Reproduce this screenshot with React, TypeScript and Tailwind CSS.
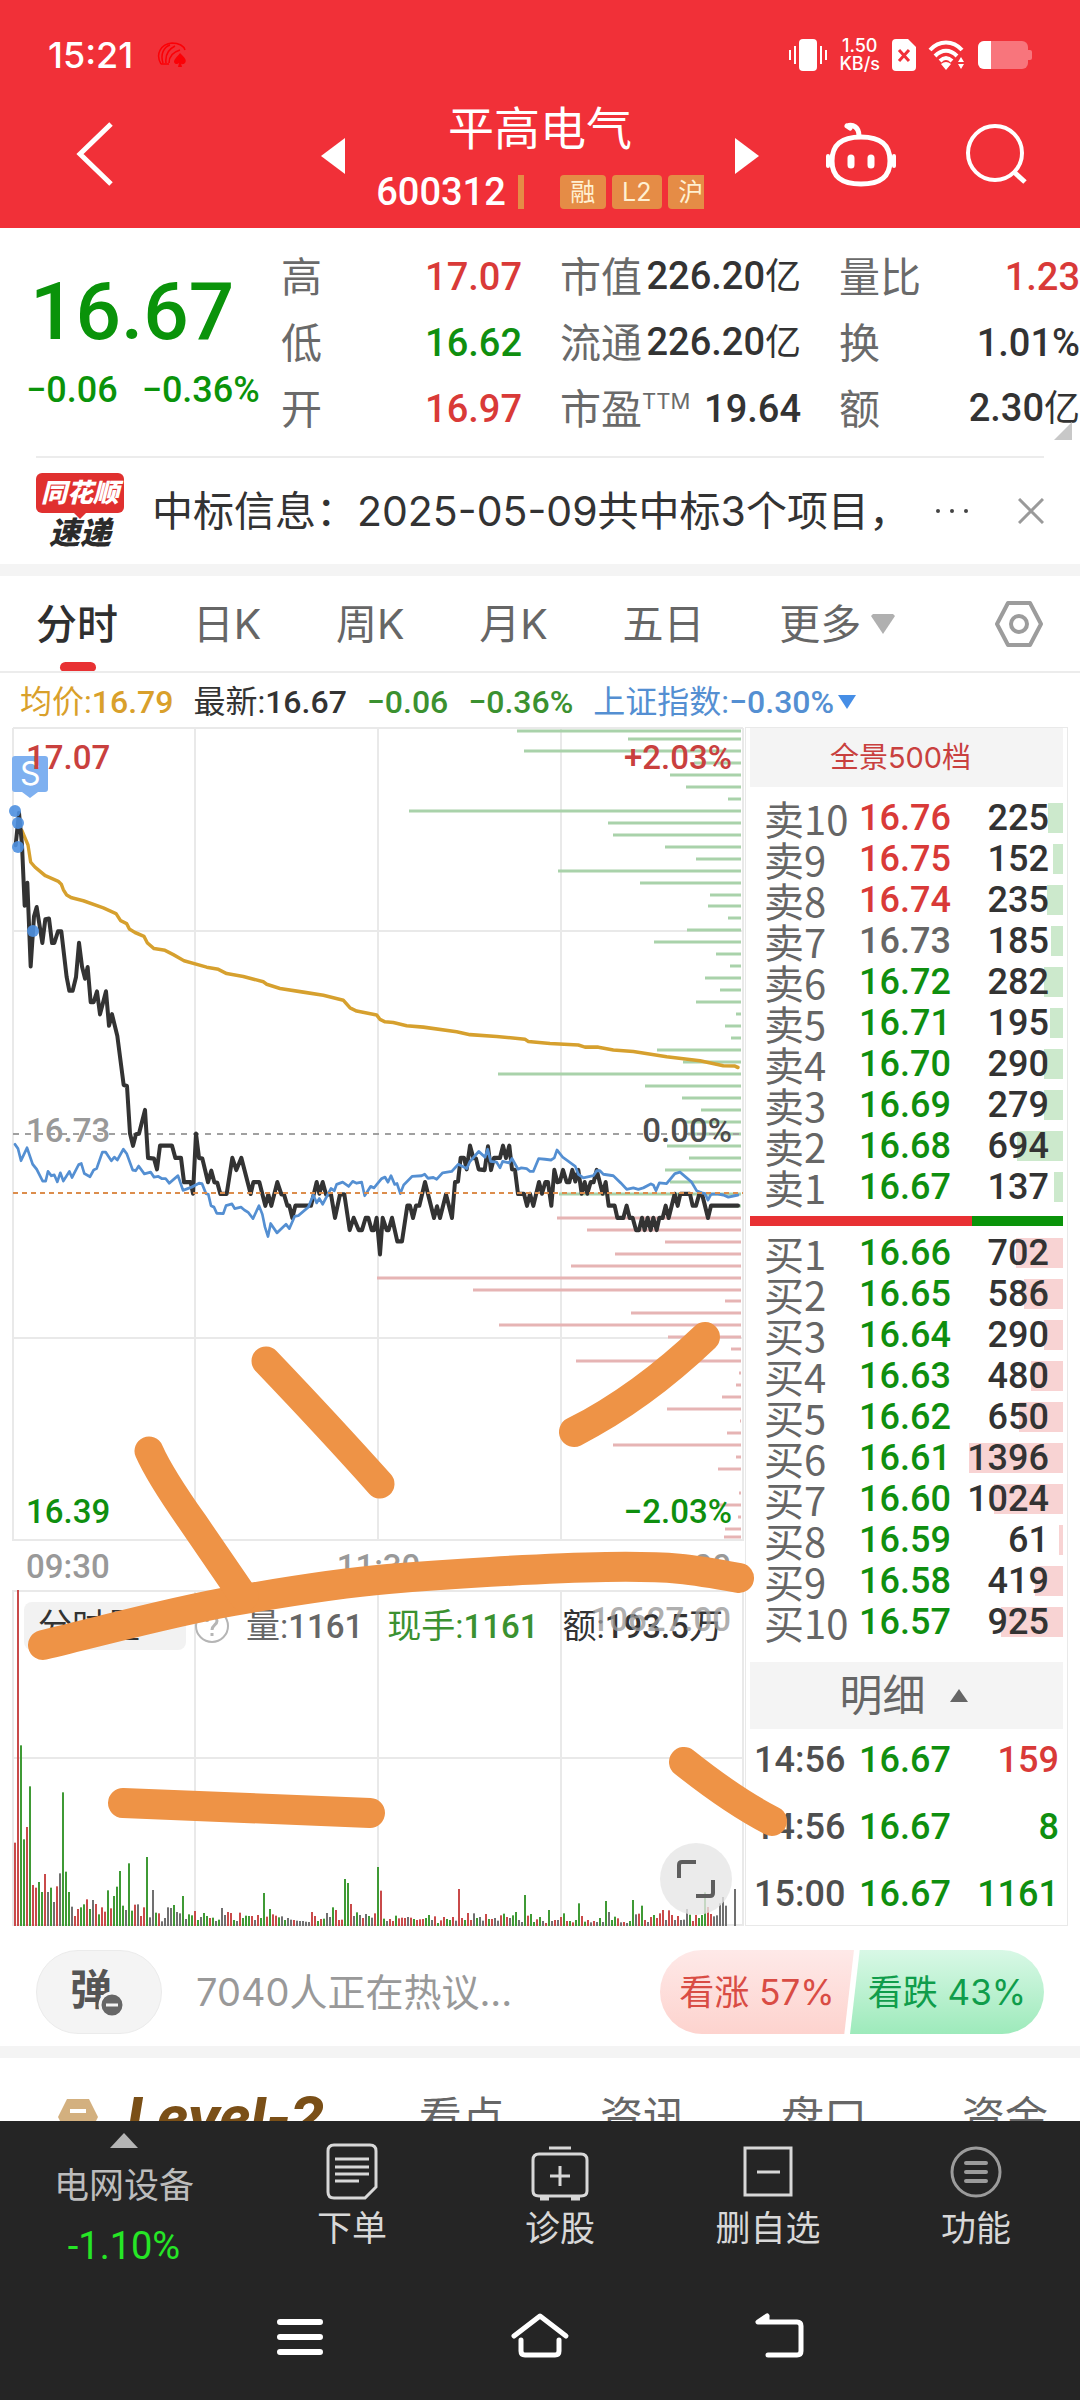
import React from "react";

const NUM = "font-['Roboto','Noto_Sans_CJK_SC',sans-serif] font-medium whitespace-nowrap";

/* ---------- data ---------- */

const PRICE_LINE =
  "47,350 57,260 66,350 74,520 82,456 92,690 102,550 110,524 127,624 136,558 147,556 156,624 163,624 174,592 184,592 200,720 208,758 218,758 228,720 237,624 246,690 255,724 263,692 272,790 281,790 291,760 300,824 318,760 327,856 336,824 352,885 371,1022 381,1025 390,1158 399,1192 408,1160 417,1158 435,1092 444,1226 462,1228 471,1258 480,1192 516,1192 526,1226 543,1226 552,1294 572,1294 579,1326 588,1158 597,1226 607,1228 624,1294 634,1262 643,1294 652,1296 661,1327 680,1327 697,1226 709,1260 724,1226 752,1327 760,1294 778,1294 796,1360 805,1328 814,1360 832,1294 844,1328 852,1328 862,1360 868,1360 877,1394 886,1360 933,1360 950,1294 958,1326 968,1294 978,1328 993,1328 1005,1394 1020,1328 1033,1328 1049,1428 1061,1394 1076,1428 1086,1428 1097,1394 1105,1394 1115,1428 1122,1428 1130,1394 1140,1496 1148,1394 1160,1428 1166,1428 1176,1394 1192,1460 1206,1460 1222,1360 1230,1360 1239,1394 1248,1360 1258,1360 1275,1294 1302,1394 1311,1362 1320,1394 1338,1328 1356,1394 1365,1294 1374,1292 1382,1226 1392,1226 1400,1258 1410,1192 1420,1226 1428,1228 1436,1258 1454,1260 1464,1194 1473,1260 1482,1226 1500,1226 1509,1192 1518,1226 1528,1192 1536,1258 1545,1260 1554,1327 1572,1327 1581,1360 1590,1327 1600,1360 1617,1294 1626,1326 1636,1294 1644,1294 1654,1360 1663,1260 1672,1294 1680,1292 1689,1260 1700,1294 1708,1294 1717,1260 1726,1292 1735,1260 1745,1326 1754,1294 1762,1326 1772,1294 1781,1294 1790,1260 1808,1326 1817,1294 1826,1360 1844,1360 1852,1394 1870,1394 1880,1360 1889,1394 1898,1394 1908,1428 1917,1428 1926,1394 1934,1428 1943,1394 1952,1428 1960,1394 1970,1428 1978,1394 1988,1394 1997,1360 2006,1394 2024,1327 2033,1360 2041,1327 2070,1327 2078,1360 2088,1360 2098,1327 2106,1327 2124,1394 2133,1360 2214,1360";

const AVG_LINE =
  "66,310 84,350 92,398 105,412 136,436 175,452 184,460 190,475 200,490 215,498 250,506 310,526 348,542 362,562 380,570 388,585 405,595 432,606 442,624 462,640 495,645 520,657 552,674 620,692 655,698 680,710 730,718 790,733 800,740 840,752 910,762 970,771 1030,785 1050,806 1070,815 1130,826 1140,838 1155,845 1180,847 1220,856 1270,860 1370,873 1410,881 1490,886 1575,894 1585,900 1650,906 1735,910 1755,916 1795,916 1840,924 1900,928 2000,943 2100,954 2170,968 2205,969 2214,973";

const INDEX_LINE =
  "45,1188 54,1200 63,1234 81,1198 98,1244 110,1258 128,1291 137,1291 144,1264 154,1276 163,1274 172,1293 181,1268 190,1291 208,1264 216,1281 236,1245 244,1242 253,1270 270,1279 281,1260 290,1256 307,1210 317,1210 334,1234 343,1224 352,1232 370,1202 380,1214 398,1260 407,1262 416,1249 433,1271 452,1266 462,1280 475,1278 485,1284 497,1284 508,1297 534,1276 549,1317 575,1308 597,1297 606,1298 618,1326 625,1328 633,1360 642,1364 650,1381 670,1382 678,1360 696,1355 704,1368 723,1364 733,1372 744,1378 759,1396 777,1360 787,1384 795,1420 804,1446 812,1410 831,1436 858,1412 868,1424 884,1390 895,1388 925,1364 940,1330 950,1352 958,1340 968,1356 993,1312 1003,1318 1010,1300 1028,1294 1046,1306 1058,1292 1070,1297 1085,1294 1094,1332 1112,1306 1122,1310 1145,1284 1155,1280 1164,1294 1173,1276 1184,1300 1191,1298 1201,1326 1211,1302 1236,1278 1265,1276 1274,1272 1284,1283 1300,1281 1310,1286 1328,1268 1355,1264 1375,1244 1400,1256 1410,1236 1436,1208 1455,1224 1463,1202 1472,1236 1490,1238 1500,1254 1508,1236 1527,1240 1536,1228 1554,1258 1564,1254 1580,1256 1590,1264 1600,1264 1616,1228 1635,1230 1653,1232 1663,1226 1671,1204 1688,1224 1726,1250 1735,1272 1750,1282 1780,1276 1790,1262 1800,1262 1810,1272 1840,1276 1862,1296 1880,1314 1900,1310 1915,1314 1930,1310 1952,1299 1960,1302 1968,1318 1978,1296 2000,1298 2025,1270 2040,1266 2075,1294 2090,1318 2105,1324 2115,1326 2124,1344 2133,1328 2150,1327 2170,1330 2185,1336 2214,1330";

/* depth bars: [y, left edge] */
const SELL_DEPTH: [number, number][] = [
  [731, 517], [739, 628], [751, 524], [763, 694], [775, 670], [787, 686], [799, 728], [811, 409], [823, 608],
  [835, 613], [847, 665], [859, 696], [871, 558], [883, 640], [895, 710], [906, 708], [918, 728], [930, 687],
  [942, 654], [954, 716], [966, 730], [978, 705], [990, 720], [1002, 696], [1014, 736], [1026, 725], [1038, 731],
  [1050, 657], [1062, 683], [1074, 498], [1086, 645], [1098, 682], [1110, 701], [1122, 684], [1134, 688],
  [1146, 667], [1158, 689], [1170, 665], [1182, 670], [1194, 559], [1206, 713],
];
const BUY_DEPTH: [number, number][] = [
  [1218, 557], [1230, 587], [1242, 665], [1254, 615], [1266, 571], [1278, 377], [1290, 473], [1301, 725],
  [1313, 631], [1325, 499], [1337, 668], [1349, 731], [1361, 576], [1373, 739], [1385, 736], [1397, 722],
  [1409, 667], [1421, 740], [1433, 727], [1445, 613], [1457, 736], [1469, 718], [1493, 739], [1505, 716],
  [1517, 738], [1529, 725], [1537, 724],
];

const VOLUME =
  "r848 r90 g556 g838 r801 g679 r975 r983 g966 g996 r942 k996 g983 k1026 r979 k940 g697 g935 g996 k1040 r1068 r1047 g1042 g1033 r1018 g1047 k1020 r1032 g1063 r1042 r1055 g991 r1045 g1008 g980 g933 g1037 k1050 g910 g1052 r1034 k1033 r1068 r1042 g891 k1072 k990 g1058 r1060 k1084 k1074 k1042 k1044 g1035 k1056 k1060 g1008 k1077 g1063 g1066 r1053 g1080 k1071 g1059 g1068 r1074 g1073 k1083 g1079 k1044 k1065 r1056 r1059 g1080 k1083 r1058 g1074 g1067 g1068 r1068 k1080 r1065 g1074 g999 r1070 g1047 r1063 r1067 g1072 k1069 g1080 k1074 k1079 r1080 k1082 k1083 k1083 k1085 k1086 r1056 r1068 g1083 r1077 g1076 k1059 k1071 g1042 r1050 r1080 r1079 g957 g969 r1032 k1068 g1057 k1065 r1074 k1062 g1068 k1073 r1060 g921 r992 g1076 k1083 r1077 r1083 g1067 r1075 r1073 r1074 k1071 r1073 g1077 r1080 r1078 r1077 g1074 g1065 k1080 r1069 g1089 r1081 r1071 g1077 g1080 r1071 k1082 r987 r1074 g1080 r1059 r1080 k1060 g1074 k1071 k1082 r1062 g1077 r1077 k1074 k1082 r1066 g1061 r1071 k1074 g1066 g1056 k1080 k1086 g1005 r1067 g1062 g1086 r1078 g1071 k1083 r1089 g1050 k1083 r1080 k1080 r1071 g1060 r1083 g1083 r1087 g1080 g1030 r1068 g1085 r1080 k1087 r1083 k1086 g1074 k1086 g1023 k1056 g1080 g1070 r1075 k1087 r1086 k1089 g1083 g1020 k1063 r1061 g1037 r1080 k1086 r1071 g1065 r1074 r1060 r1050 k1080 r1051 r1065 k1080 r1068 k1080 k1079 k1047 g1064 r1083 r1065 g1074 g1065 g997 r1041 r1062 k1069 k1066 k1030 k1011 k1037 k1098 k1098 k987"
    .split(" ")
    .map((t) => ({ kind: t[0], top: Number(t.slice(1)) }));
const VOLUME_COLOR: Record<string, string> = { r: "#c94a4a", g: "#3f9a35", k: "#707070" };

const SELLS: [string, string, number, string][] = [
  ["卖10", "16.76", 225, "text-[#d93a38]"],
  ["卖9", "16.75", 152, "text-[#d93a38]"],
  ["卖8", "16.74", 235, "text-[#d93a38]"],
  ["卖7", "16.73", 185, "text-[#666666]"],
  ["卖6", "16.72", 282, "text-[#0f8f0f]"],
  ["卖5", "16.71", 195, "text-[#0f8f0f]"],
  ["卖4", "16.70", 290, "text-[#0f8f0f]"],
  ["卖3", "16.69", 279, "text-[#0f8f0f]"],
  ["卖2", "16.68", 694, "text-[#0f8f0f]"],
  ["卖1", "16.67", 137, "text-[#0f8f0f]"],
];
const BUYS: [string, string, number, string][] = [
  ["买1", "16.66", 702, "text-[#0f8f0f]"],
  ["买2", "16.65", 586, "text-[#0f8f0f]"],
  ["买3", "16.64", 290, "text-[#0f8f0f]"],
  ["买4", "16.63", 480, "text-[#0f8f0f]"],
  ["买5", "16.62", 650, "text-[#0f8f0f]"],
  ["买6", "16.61", 1396, "text-[#0f8f0f]"],
  ["买7", "16.60", 1024, "text-[#0f8f0f]"],
  ["买8", "16.59", 61, "text-[#0f8f0f]"],
  ["买9", "16.58", 419, "text-[#0f8f0f]"],
  ["买10", "16.57", 925, "text-[#0f8f0f]"],
];
const TRADES: [string, string, string, string][] = [
  ["14:56", "16.67", "159", "text-[#d93a38]"],
  ["14:56", "16.67", "8", "text-[#0f8f0f]"],
  ["15:00", "16.67", "1161", "text-[#0f8f0f]"],
];

/* ---------- header ---------- */

function StatusBar() {
  return (
    <div className="flex h-[110px] items-center justify-between pl-12 pr-12 text-white">
      <div className="flex items-center gap-6">
        <span className="text-[36px] font-medium leading-10">15:21</span>
        <svg width="30" height="26" viewBox="0 0 30 26" fill="none" stroke="#fb0006" strokeWidth="1.5">
          <path d="M4 22C-2 12 4 2 15 1c7 0 12 3 13 7M6 21C3 12 7 5 13 3M9 21C8 13 12 7 18 4M12 21c0-6 4-11 11-13M4 22h8" />
          <path d="M23 11c5 5 7 7 5 10-2 2-4 1-4 0l1 4h-4l1-4c-1 1-4 2-5-1 0-3 3-5 6-9z" fill="#fb0006" stroke="none" />
        </svg>
      </div>
      <div className="flex items-center gap-3">
        <svg width="38" height="32" viewBox="0 0 38 32" fill="#fff">
          <rect x="10" y="0" width="18" height="32" rx="4" />
          <path d="M5 7h2v18H5zM31 7h2v18h-2zM0 11h2v10H0zM36 11h2v10h-2z" />
        </svg>
        <span className="text-center text-[18px] font-medium leading-[18px]">
          1.50
          <br />
          KB/s
        </span>
        <svg width="24" height="32" viewBox="0 0 24 32">
          <path d="M4 0h12l8 8v20a4 4 0 0 1-4 4H4a4 4 0 0 1-4-4V4a4 4 0 0 1 4-4z" fill="#fff" />
          <path d="M7 11l10 11M17 11L7 22" stroke="#f13038" strokeWidth="3" />
        </svg>
        <svg width="38" height="30" viewBox="0 0 38 30" fill="none" stroke="#fff" strokeWidth="4">
          <path d="M2 10C11 0 25 0 34 10M7 16c7-7 15-7 22 0M12 21c4-4 8-4 12 0" />
          <path d="M13 24q5-4 10 0l-5 6zM30 22l3-5 3 5zM30 24l3 5 3-5z" fill="#fff" stroke="none" />
        </svg>
        <svg width="54" height="28" viewBox="0 0 54 28">
          <rect width="50" height="28" rx="6" fill="#f8757c" />
          <path d="M50 9h2a2 2 0 0 1 2 2v6a2 2 0 0 1-2 2h-2z" fill="#f8757c" />
          <path d="M6 0h7v28H6a6 6 0 0 1-6-6V6a6 6 0 0 1 6-6z" fill="#fff" />
        </svg>
      </div>
    </div>
  );
}

function Header() {
  return (
    <header className="shrink-0 bg-[#f13038]">
      <StatusBar />
      <div className="grid h-[118px] grid-cols-[1fr_438px_1fr] items-start text-white">
        <div className="pl-[74px] pt-2.5">
          <button type="button" aria-label="返回" className="block">
            <svg width="42" height="68" viewBox="0 0 42 68" fill="none" stroke="#fff" strokeWidth="5">
              <path d="M37 4L6 34l31 30" />
            </svg>
          </button>
        </div>
        <div className="flex justify-between">
          <button type="button" aria-label="上一只" className="mt-7 self-start">
            <svg width="24" height="36" viewBox="0 0 24 36" fill="#fff"><path d="M24 0v36L0 18z" /></svg>
          </button>
          <div className="flex flex-col items-center">
            <h1 className="-mt-5 text-[46px] font-normal leading-[76px]">平高电气</h1>
            <div className="mt-[9px] flex h-[34px] items-center">
              <span className={`text-[38px] leading-[34px] ${NUM}`}>600312</span>
              <span className="ml-3 h-[34px] w-1.5 bg-[#e58c46]" />
              <div className="ml-9 flex w-36 gap-1.5 overflow-hidden text-[25px] leading-[34px] text-[#fff0d2]">
                <span className="w-[46px] shrink-0 rounded-sm bg-[#e58c46] text-center">融</span>
                <span className="w-[50px] shrink-0 rounded-sm bg-[#e58c46] text-center">L2</span>
                <span className="w-[46px] shrink-0 rounded-sm bg-[#e58c46] text-center">沪</span>
              </div>
            </div>
          </div>
          <button type="button" aria-label="下一只" className="mt-7 self-start">
            <svg width="24" height="36" viewBox="0 0 24 36" fill="#fff"><path d="M0 0v36l24-18z" /></svg>
          </button>
        </div>
        <div className="flex justify-end gap-[66px] pr-[51px] pt-3">
          <button type="button" aria-label="智能助手">
            <svg width="72" height="66" viewBox="0 0 72 66" fill="none" stroke="#fff" strokeWidth="5" strokeLinecap="round">
              <path d="M22 4c6-2 12 1 12 10M22 4l3 2" />
              <path d="M36 15c21 0 29 9 29 24 0 16-10 23-29 23S7 55 7 39c0-15 8-24 29-24z" />
              <path d="M3 34v10M69 34v10" strokeWidth="4" />
              <path d="M26 36v7M46 36v7" strokeWidth="7" />
            </svg>
          </button>
          <button type="button" aria-label="搜索">
            <svg width="66" height="66" viewBox="0 0 66 66" fill="none" stroke="#fff" strokeWidth="4">
              <circle cx="32" cy="31" r="27" />
              <path d="M51 50l11 10" strokeWidth="5" />
            </svg>
          </button>
        </div>
      </div>
    </header>
  );
}

/* ---------- quote ---------- */

function Stat({ label, sup, value, unit, tone }: { label: string; sup?: string; value: string; unit?: string; tone: string }) {
  return (
    <div className="flex items-center justify-between whitespace-nowrap">
      <dt className="flex text-[41px] leading-[65px] text-[#6a6a6a]">
        {label}
        {sup && <span className="-mt-2 text-[22px]">{sup}</span>}
      </dt>
      <dd className={`text-[38px] leading-[65px] ${NUM} ${tone}`}>
        {value}
        {unit && <span className="text-[36px] font-normal">{unit}</span>}
      </dd>
    </div>
  );
}

function Quote() {
  const dark = "text-[#333333]";
  const red = "text-[#d93a38]";
  return (
    <section className="relative flex h-[228px] pt-4">
      <div className="w-[281px] shrink-0 text-[#0a930a]">
        <p className={`pl-[30px] pt-5 text-[80px] leading-[96px] ${NUM}`}>16.67</p>
        <p className={`flex gap-6 pl-[26px] pt-2 text-[36px] leading-[44px] ${NUM}`}>
          <span>−0.06</span>
          <span>−0.36%</span>
        </p>
      </div>
      <dl className="grid flex-1 grid-cols-3 content-start gap-x-[38px]">
        <Stat label="高" value="17.07" tone={red} />
        <Stat label="市值" value="226.20" unit="亿" tone={dark} />
        <Stat label="量比" value="1.23" tone={red} />
        <Stat label="低" value="16.62" tone="text-[#0f8f0f]" />
        <Stat label="流通" value="226.20" unit="亿" tone={dark} />
        <Stat label="换" value="1.01%" tone={dark} />
        <Stat label="开" value="16.97" tone={red} />
        <Stat label="市盈" sup="TTM" value="19.64" tone={dark} />
        <Stat label="额" value="2.30" unit="亿" tone={dark} />
      </dl>
      <svg className="absolute bottom-4 right-2" width="18" height="18" viewBox="0 0 18 18"><path d="M18 0v18H0z" fill="#c8c8c8" /></svg>
    </section>
  );
}

function News() {
  return (
    <section className="mx-9 flex h-[108px] items-center border-t-2 border-[#ececec]">
      <div className="flex w-[88px] shrink-0 flex-col items-center whitespace-nowrap font-black italic">
        <span className="relative w-full rounded-md bg-[#e0302f] text-center text-[26px] leading-10 text-white">
          同花顺
          <svg className="absolute -bottom-1.5 left-9" width="16" height="8" viewBox="0 0 16 8"><path d="M0 0h16L8 8z" fill="#e0302f" /></svg>
        </span>
        <span className="mt-1 text-[31px] leading-8 text-[#2b2b2b]">速递</span>
      </div>
      <a href="#news" className="ml-7 min-w-0 flex-1 overflow-hidden whitespace-nowrap text-[41px] leading-[56px] text-[#333333]">
        中标信息：2025-05-09共中标3个项目，
      </a>
      <span className="flex gap-2.5 pl-2">
        <i className="size-1 rounded-full bg-[#444]" />
        <i className="size-1 rounded-full bg-[#444]" />
        <i className="size-1 rounded-full bg-[#444]" />
      </span>
      <button type="button" aria-label="关闭" className="ml-[50px]">
        <svg width="26" height="26" viewBox="0 0 26 26" stroke="#9a9a9a" strokeWidth="3"><path d="M1 1l24 24M25 1L1 25" /></svg>
      </button>
    </section>
  );
}

function PeriodTabs() {
  return (
    <nav className="flex h-[97px] items-center justify-between border-b-2 border-[#ececec] px-9 text-[41px] leading-[60px] text-[#666666]">
      <button type="button" className="relative flex h-full items-center font-medium text-[#2f2f2f]">
        分时
        <span className="absolute bottom-0 left-6 h-[9px] w-9 rounded-t-md rounded-b-sm bg-[#e83133]" />
      </button>
      <button type="button">日K</button>
      <button type="button">周K</button>
      <button type="button">月K</button>
      <button type="button">五日</button>
      <button type="button" className="flex items-center gap-2.5">
        更多
        <svg width="24" height="20" viewBox="0 0 24 20"><path d="M2 0h20l2 2-12 18L0 2z" fill="#b0b0b0" /></svg>
      </button>
      <button type="button" aria-label="设置" className="ml-6">
        <svg width="50" height="48" viewBox="0 0 50 48" fill="none" stroke="#9c9c9c" strokeWidth="4" strokeLinejoin="round">
          <path d="M14 3h22l11 21-11 21H14L3 24z" />
          <circle cx="25" cy="24" r="8" />
        </svg>
      </button>
    </nav>
  );
}

function Legend() {
  return (
    <div className={`flex h-[54px] items-center gap-5 pl-5 pt-1 text-[32px] leading-[50px] ${NUM}`}>
      <span className="text-[#d9a02b]"><span className="font-normal">均价:</span>16.79</span>
      <span className="text-[#333333]"><span className="font-normal">最新:</span>16.67</span>
      <span className="text-[#3b9130]">−0.06</span>
      <span className="text-[#3b9130]">−0.36%</span>
      <button type="button" className="flex items-center gap-1 text-[#548fd2]">
        <span><span className="font-normal">上证指数:</span>−0.30%</span>
        <svg width="18" height="14" viewBox="0 0 18 14"><path d="M0 0h18L9 14z" fill="#468ee6" /></svg>
      </button>
    </div>
  );
}

/* ---------- charts ---------- */

function PriceChart() {
  return (
    <div className={`relative h-[814px] text-[33px] leading-[40px] ${NUM}`}>
      <svg className="h-full w-full" viewBox="0 727 745 814" preserveAspectRatio="none" fill="none">
        <g stroke="#e9e9e9" strokeWidth="2">
          <path d="M13 728V1541M195 728V1541M378 728V1541M561 728V1541M743 728V1541M13 728H743M13 931H743M13 1338H743M13 1540H743" />
        </g>
        <g stroke="#a9d2aa" strokeWidth="3">
          {SELL_DEPTH.map(([y, x]) => <path key={y} d={`M${x} ${y}H741`} />)}
        </g>
        <g stroke="#e6b4b4" strokeWidth="3">
          {BUY_DEPTH.map(([y, x]) => <path key={y} d={`M${x} ${y}H741`} />)}
        </g>
        <path d="M13 1134H741" stroke="#a0a0a0" strokeWidth="2" strokeDasharray="6 6" />
        <path d="M12 759a3 3 0 0 1 3-3h30a3 3 0 0 1 3 3v30a3 3 0 0 1-3 3h-7l-8 6-8-6h-7a3 3 0 0 1-3-3z" fill="#7eb0f0" />
        <g transform="translate(0 720) scale(.33333 .35714)" strokeLinejoin="round" strokeLinecap="round">
          <polyline points={AVG_LINE} stroke="#d6a02e" strokeWidth="10" />
          <polyline points={PRICE_LINE} stroke="#333333" strokeWidth="12" />
          <polyline points={INDEX_LINE} stroke="#548fd2" strokeWidth="8" />
        </g>
        <path d="M13 1193H743" stroke="#dc8d4c" strokeWidth="2" strokeDasharray="5 4" />
        <g fill="#4e90e0" fillOpacity=".9">
          <circle cx="15" cy="811" r="6" />
          <circle cx="18" cy="823" r="6" />
          <circle cx="18" cy="847" r="6" />
          <circle cx="33" cy="931" r="6" />
        </g>
      </svg>
      <span className="absolute left-5 top-[29px] font-['Inter'] text-[32px] font-normal leading-9 text-white">S</span>
      <span className="absolute left-[26px] top-[11px] text-[#c9403e]">17.07</span>
      <span className="absolute right-[13px] top-[11px] text-[#c9403e]">+2.03%</span>
      <span className="absolute left-[26px] top-[384px] text-[#999999]">16.73</span>
      <span className="absolute right-[13px] top-[384px] text-[#4d4d4d]">0.00%</span>
      <span className="absolute bottom-[9px] left-[26px] text-[#0f8f0f]">16.39</span>
      <span className="absolute bottom-[9px] right-[13px] text-[#0f8f0f]">−2.03%</span>
    </div>
  );
}

function VolumeChart() {
  return (
    <div className="relative h-[336px]">
      <svg className="h-full w-full" viewBox="0 1590 745 336" preserveAspectRatio="none" fill="none">
        <path d="M13 1590V1926M195 1590V1926M378 1590V1926M561 1590V1926M743 1590V1926M13 1591H743M13 1758H743M13 1925H743" stroke="#e9e9e9" strokeWidth="2" />
        {VOLUME.map(({ kind, top }, i) => (
          <rect key={i} x={14 + i * 3} y={1560 + top / 3} width="2" height={Math.max(0, 1098 - top) / 3} fill={VOLUME_COLOR[kind]} />
        ))}
      </svg>
      <div className={`absolute inset-x-0 top-3 flex h-12 items-center pl-6 text-[33px] leading-[48px] ${NUM}`}>
        <button type="button" className="h-12 w-[162px] shrink-0 rounded-lg bg-[#f2f2f2] pl-3.5 text-left text-[34px] font-normal leading-[46px] text-[#333333]">分时量</button>
        <svg className="ml-2 shrink-0" width="36" height="36" viewBox="0 0 36 36" fill="none" stroke="#b5b5b5" strokeWidth="2">
          <circle cx="18" cy="18" r="16" />
          <path d="M13 14c0-7 10-7 10-1 0 4-5 4-5 9M18 25v3" strokeWidth="3" />
        </svg>
        <span className="ml-4 text-[#666666]"><span className="text-[34px] font-normal">量:</span>1161</span>
        <span className="ml-6 text-[#3b9130]"><span className="text-[34px] font-normal">现手:</span>1161</span>
        <span className="ml-6 text-[#333333]"><span className="text-[34px] font-normal">额:</span>193.5<span className="text-[34px] font-normal">万</span></span>
      </div>
      <span className={`absolute right-[14px] top-[10px] text-[33px] leading-[40px] text-[#999999]/80 ${NUM}`}>10627.00</span>
      <button type="button" aria-label="全屏" className="absolute bottom-[11px] right-[13px] flex size-[72px] items-center justify-center rounded-full bg-[#e6e6e6]/80">
        <svg width="38" height="38" viewBox="0 0 38 38" fill="none" stroke="#5e5e5e" strokeWidth="4"><path d="M2 18V5q0-3 3-3h14M36 20v13q0 3-3 3H19" /></svg>
      </button>
    </div>
  );
}

function Strokes() {
  return (
    <svg className="pointer-events-none absolute inset-0 h-full w-full overflow-visible" viewBox="0 727 745 1199" preserveAspectRatio="none" fill="none" stroke="#ee9346" strokeWidth="30" strokeLinecap="round">
      <path d="M43 1645C110 1629 170 1612 233 1601S340 1583 388 1579S540 1568 606 1567S690 1569 739 1578" />
      <path d="M149 1451Q160 1476 194 1524L244 1597" strokeWidth="29" />
      <path d="M266 1361Q330 1428 380 1484" strokeWidth="29" />
      <path d="M705 1337Q641 1398 574 1432" />
      <path d="M123 1803L370 1813" />
      <path d="M684 1762Q733 1801 772 1821" />
    </svg>
  );
}

function BookRows({ rows, barClass }: { rows: [string, string, number, string][]; barClass: string }) {
  return (
    <table className="w-full table-fixed">
      <tbody>
        {rows.map(([label, price, volume, tone]) => (
          <tr key={label} className="h-[41px]">
            <th scope="row" className="w-[109px] whitespace-nowrap p-0 pl-3.5 text-left font-['Noto_Sans_CJK_SC',sans-serif] text-[40px] font-normal leading-[38px] text-[#666666]">{label}</th>
            <td className={`w-[97px] p-0 pt-0.5 text-[36px] leading-[39px] ${NUM} ${tone}`}>{price}</td>
            <td className={`relative p-0 pr-3.5 pt-0.5 text-right text-[36px] leading-[39px] text-[#333333] ${NUM}`}>
              <span className={`absolute right-0 top-[6px] h-[30px] ${barClass}`} style={{ width: `${Math.round(volume * 0.067)}px` }} />
              <span className="relative">{volume}</span>
            </td>
          </tr>
        ))}
      </tbody>
    </table>
  );
}

function OrderBook() {
  return (
    <aside className="h-full w-[323px] shrink-0 border border-[#e9e9e9] px-1">
      <button type="button" className="block h-[59px] w-full bg-[#f4f4f4] pr-3 text-center text-[29px] leading-[59px] text-[#c9403e]">全景500档</button>
      <div className="pt-2.5"><BookRows rows={SELLS} barClass="bg-[#cce9cc]" /></div>
      <div className="my-[9px] mb-1.5 flex h-2.5">
        <span className="w-[71%] bg-[#e83133]" />
        <span className="flex-1 bg-[#0a930a]" />
      </div>
      <BookRows rows={BUYS} barClass="bg-[#f8d3d3]" />
      <button type="button" className="mt-5 flex h-[67px] w-full items-center justify-center gap-6 bg-[#f4f4f4] pr-1.5 text-[43px] leading-[67px] text-[#666666]">
        明细
        <svg width="18" height="13" viewBox="0 0 18 13"><path d="M9 0l9 13H0z" fill="#666" /></svg>
      </button>
      <table className={`-mt-0.5 w-full table-fixed text-[36px] leading-[67px] ${NUM}`}>
        <tbody>
          {TRADES.map(([time, price, volume, tone], i) => (
            <tr key={i} className="h-[67px]">
              <td className="w-[109px] p-0 pl-1 text-[#4f4f4f]">{time}</td>
              <td className="w-[97px] p-0 text-[#0f8f0f]">{price}</td>
              <td className={`p-0 pr-1 text-right ${tone}`}>{volume}</td>
            </tr>
          ))}
        </tbody>
      </table>
    </aside>
  );
}

function Market() {
  return (
    <section className="flex h-[1199px] pr-3">
      <div className="relative z-10 min-w-0 flex-1">
        <PriceChart />
        <div className={`flex h-[49px] items-center justify-between pl-[26px] pr-[14px] pt-0.5 text-[33px] leading-[47px] text-[#999999] ${NUM}`}>
          <span>09:30</span>
          <span>11:30</span>
          <span>15:00</span>
        </div>
        <VolumeChart />
        <Strokes />
      </div>
      <OrderBook />
    </section>
  );
}

/* ---------- discussion and lower tabs ---------- */

function Discussion() {
  return (
    <section className="flex h-[120px] items-center px-9 pt-3">
      <button type="button" aria-label="弹幕" className="relative h-[84px] w-[126px] rounded-full border border-[#ebebeb] bg-[#f4f4f4]">
        <span className="block pr-4 pb-1 text-[42px] font-bold leading-[76px] text-[#555555]">弹</span>
        <svg className="absolute left-[61px] top-[40px]" width="28" height="28" viewBox="0 0 28 28">
          <circle cx="14" cy="14" r="12" fill="#666" stroke="#f4f4f4" strokeWidth="3" />
          <path d="M8 14h12" stroke="#f4f4f4" strokeWidth="3" />
        </svg>
      </button>
      <input aria-label="参与热议" placeholder="7040人正在热议..." className="ml-[34px] min-w-0 flex-1 bg-transparent text-[38px] leading-[50px] outline-none placeholder:text-[#999999]" />
      <div className="flex h-[84px] w-[384px] overflow-hidden rounded-full text-[35px] leading-[84px]">
        <button type="button" className="w-[194px] bg-linear-to-b from-[#fee9e8] to-[#fdd3ce] text-[#d94c44] [clip-path:polygon(0_0,100%_0,95%_100%,0_100%)]">看涨 57%</button>
        <button type="button" className="-ml-1 flex-1 bg-linear-to-b from-[#d8f8e6] to-[#9deabb] text-[#0f9d4b] [clip-path:polygon(5%_0,100%_0,100%_100%,0_100%)]">看跌 43%</button>
      </div>
    </section>
  );
}

function LowerTabs() {
  return (
    <nav className="flex items-center justify-between pl-[57px] pr-8 pt-[26px] text-[43px] leading-[66px] text-[#666666]">
      <button type="button" className="flex items-center gap-7 font-['Inter'] text-[53px] font-extrabold italic text-[#7a4f17]">
        <svg width="42" height="42" viewBox="0 0 42 42">
          <path d="M10 3h22l9 18-9 18H10L1 21z" fill="#d3b07f" />
          <path d="M13 13h16v4H13z" fill="#fff" />
        </svg>
        Level-2
      </button>
      <button type="button">看点</button>
      <button type="button">资讯</button>
      <button type="button">盘口</button>
      <button type="button">资金</button>
    </nav>
  );
}

/* ---------- bottom bars ---------- */

function Action({ label, children }: { label: string; children: React.ReactNode }) {
  return (
    <button type="button" className="flex flex-col items-center pt-[22px] text-[35px] leading-[50px] text-[#d8d8d8]">
      <svg width="60" height="58" viewBox="0 0 60 58" fill="none" stroke="#d8d8d8" strokeWidth="3">{children}</svg>
      <span className="mt-0.5">{label}</span>
    </button>
  );
}

function BottomBar() {
  return (
    <footer className="h-[279px] shrink-0 bg-[#252525]">
      <div className="grid h-[160px] grid-cols-[248fr_208fr_208fr_208fr_208fr]">
        <button type="button" className="flex flex-col items-center pt-3 text-[35px] leading-[50px] text-[#bdbdbd]">
          <svg width="28" height="15" viewBox="0 0 28 15"><path d="M14 0l14 15H0z" fill="#b5b5b5" /></svg>
          <span className="mt-3">电网设备</span>
          <span className="mt-[11px] font-['Roboto'] text-[38px] text-[#26e626]">-1.10%</span>
        </button>
        <Action label="下单">
          <path d="M12 2h36q6 0 6 6v36L43 55H12q-6 0-6-6V8q0-6 6-6zM13 16h34M13 24h34M13 31h34M13 38h24" />
        </Action>
        <Action label="诊股">
          <path d="M9 11h42q6 0 6 6v31q0 5-6 5H9q-6 0-6-5V17q0-6 6-6zM19 5h22M30 23v20M20 33h20M10 56h9M41 56h9" />
        </Action>
        <Action label="删自选">
          <path d="M7 5h46v47H7zM19 29h23" />
        </Action>
        <Action label="功能">
          <g stroke="#9b9b9b">
            <circle cx="30" cy="29" r="24" />
            <path d="M20 20h20M20 29h20M20 38h20" strokeWidth="4" strokeLinecap="round" />
          </g>
        </Action>
      </div>
      <div className="flex h-[110px] items-center justify-center gap-[180px]">
        <button type="button" aria-label="最近任务">
          <svg width="60" height="48" viewBox="0 0 60 48" stroke="#fff" strokeWidth="6" strokeLinecap="round"><path d="M10 10h40M10 25h40M10 40h40" /></svg>
        </button>
        <button type="button" aria-label="主页">
          <svg width="60" height="48" viewBox="0 0 60 48" fill="none" stroke="#fff" strokeWidth="5" strokeLinecap="round" strokeLinejoin="round"><path d="M4 24L30 4l26 20M11 28v11q0 4 4 4h30q4 0 4-4V28" /></svg>
        </button>
        <button type="button" aria-label="返回上级">
          <svg width="60" height="48" viewBox="0 0 60 48" fill="none" stroke="#fff" strokeWidth="5" strokeLinecap="round" strokeLinejoin="round"><path d="M17 4L8 10h39q4 0 4 4v25q0 4-4 4H18M17 4v6" /></svg>
        </button>
      </div>
    </footer>
  );
}

export default function App() {
  return (
    <div className="flex h-screen flex-col bg-white font-['Inter','Noto_Sans_CJK_SC',sans-serif]">
      <Header />
      <main className="min-h-0 flex-1 overflow-hidden">
        <Quote />
        <News />
        <div className="h-3 bg-[#f4f4f4]" />
        <PeriodTabs />
        <Legend />
        <Market />
        <Discussion />
        <div className="h-3 bg-[#f4f4f4]" />
        <LowerTabs />
      </main>
      <BottomBar />
    </div>
  );
}
